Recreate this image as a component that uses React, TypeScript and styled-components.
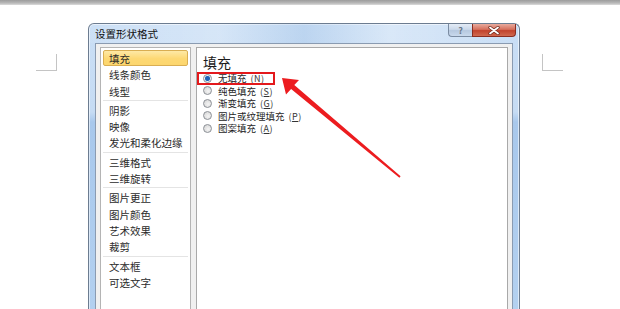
import styled, { createGlobalStyle } from "styled-components";

const GlobalStyle = createGlobalStyle`
  html, body {
    margin: 0;
    padding: 0;
    background: #ffffff;
  }
  body {
    font-family: "Noto Sans CJK SC", "Noto Sans", sans-serif;
    overflow: hidden;
  }
`;

const Page = styled.div`
  position: relative;
  width: 620px;
  height: 309px;
  overflow: hidden;
  background: #ffffff;
`;

const TopBar = styled.div`
  height: 5px;
  background: linear-gradient(#9c9c9c, #b8b8b8 60%, #dcdcdc);
`;

const Canvas = styled.div`
  display: flex;
  align-items: flex-start;
  padding: 18px 0 0 36px;
`;

const CropMark = styled.div<{ side: "left" | "right" }>`
  flex: none;
  width: 20px;
  height: 16px;
  margin-top: 31px;
  border-bottom: 1px solid #c4c4c4;
  ${({ side }) =>
    side === "left"
      ? "border-right: 1px solid #c4c4c4; margin-right: 31px;"
      : "border-left: 1px solid #c4c4c4; margin-left: 22px;"}
`;

const Dialog = styled.div`
  flex: none;
  box-sizing: border-box;
  width: 432px;
  height: 300px;
  display: flex;
  flex-direction: column;
  border: 1px solid #6c7c90;
  border-bottom: none;
  border-radius: 6px 6px 0 0;
  background: linear-gradient(
    180deg,
    #c9def5 0,
    #c6dcf4 88px,
    #a8c8ec 98px,
    #b4d1f0 100%
  );
  box-shadow: inset 0 0 0 1px rgba(255, 255, 255, 0.55);
`;

const TitleBar = styled.div`
  height: 19px;
  display: flex;
  align-items: flex-start;
  padding: 0 3px 0 6px;
  background: linear-gradient(
    90deg,
    rgba(255, 255, 255, 0.05) 0,
    rgba(255, 255, 255, 0.25) 30%,
    rgba(150, 185, 225, 0.25) 50%,
    rgba(255, 255, 255, 0.3) 70%,
    rgba(255, 255, 255, 0) 100%
  );
`;

const Title = styled.span`
  flex: 1;
  font-size: 10.5px;
  line-height: 20px;
  color: #111111;
`;

const CaptionButton = styled.div<{ kind: "help" | "close" }>`
  box-sizing: border-box;
  height: 13px;
  display: flex;
  align-items: center;
  justify-content: center;
  border: 1px solid ${({ kind }) => (kind === "close" ? "#8a2d20" : "#7b8ca2")};
  border-top: none;
  font-size: 9px;
  font-weight: 700;
  ${({ kind }) =>
    kind === "close"
      ? `
    width: 44px;
    border-radius: 0 0 4px 0;
    background: linear-gradient(#e8ab9e, #d5705d 45%, #c2432c 55%, #d0694f);
  `
      : `
    width: 24px;
    border-right: none;
    border-radius: 0 0 0 4px;
    color: #6a7788;
    background: linear-gradient(#e4ecf6, #cad8ea 45%, #b6c8df 55%, #c9d9ec);
  `}
`;

const Body = styled.div`
  flex: 1;
  display: flex;
  gap: 5px;
  margin: 0 6px;
  padding: 3px 4px 0;
  background: #f0f0f0;
  border: 1px solid #8a9bb1;
  border-bottom: none;
`;

const NavList = styled.div`
  flex: none;
  box-sizing: border-box;
  width: 91px;
  padding-top: 2px;
  background: #ffffff;
  border: 1px solid #b4b4b4;
  border-bottom: none;
`;

const NavItem = styled.div<{ active?: boolean }>`
  box-sizing: border-box;
  height: 16.3px;
  margin: 0 2px;
  padding-left: 5px;
  font-size: 10.5px;
  line-height: 16px;
  color: #2b2b2b;
  white-space: nowrap;
  border-radius: 2px;
  border: 1px solid ${({ active }) => (active ? "#d9ae52" : "transparent")};
  background: ${({ active }) =>
    active ? "linear-gradient(#fee9a6, #fdd873 55%, #fcd66e)" : "transparent"};
`;

const NavSeparator = styled.div`
  height: 1px;
  margin: 1px 2px;
  background: #e4e4e4;
`;

const Pane = styled.div`
  flex: 1;
  box-sizing: border-box;
  padding: 6px 0 0 6px;
  background: #ffffff;
  border: 1px solid #a9a9a9;
  border-bottom: none;
`;

const PaneHeading = styled.div`
  font-size: 14px;
  line-height: 16px;
  color: #1b1b1b;
  margin-bottom: 2px;
`;

const OptionRow = styled.div<{ marked?: boolean }>`
  position: relative;
  display: flex;
  align-items: center;
  gap: 6px;
  height: 12.5px;
  font-size: 9.5px;
  color: #1e1e1e;
  white-space: nowrap;
  ${({ marked }) =>
    marked
      ? `
    &::after {
      content: "";
      position: absolute;
      left: -6px;
      top: -0.5px;
      width: 78px;
      height: 13.5px;
      box-sizing: border-box;
      border: 2px solid #e3191c;
    }
  `
      : ""}
`;

const Radio = styled.span<{ checked?: boolean }>`
  flex: none;
  box-sizing: border-box;
  width: 9px;
  height: 9px;
  border-radius: 50%;
  border: 1px solid #8c9096;
  background: ${({ checked }) =>
    checked
      ? "radial-gradient(circle, #1f63b7 0 2px, #6e9fd6 2.6px, #eef2f6 3px)"
      : "radial-gradient(circle at 60% 60%, #f4f4f4, #d2d2d2)"};
`;

const Key = styled.span`
  font-size: 9px;
  margin-left: 4px;
  letter-spacing: 0.5px;
  color: #333333;
  & u {
    text-underline-offset: 1px;
  }
`;

const Annotation = styled.svg`
  position: absolute;
  left: 0;
  top: 0;
  pointer-events: none;
`;

const navGroups = [
  ["填充", "线条颜色", "线型"],
  ["阴影", "映像", "发光和柔化边缘"],
  ["三维格式", "三维旋转"],
  ["图片更正", "图片颜色", "艺术效果", "裁剪"],
  ["文本框", "可选文字"],
];

const fillOptions = [
  { label: "无填充", key: "N" },
  { label: "纯色填充", key: "S" },
  { label: "渐变填充", key: "G" },
  { label: "图片或纹理填充", key: "P" },
  { label: "图案填充", key: "A" },
];

function CloseGlyph() {
  return (
    <svg width="12" height="9" viewBox="0 0 12 9">
      <path
        d="M2 1.5 L10 7.5 M10 1.5 L2 7.5"
        stroke="#6b2418"
        strokeWidth="3.2"
        strokeLinecap="round"
      />
      <path
        d="M2 1.5 L10 7.5 M10 1.5 L2 7.5"
        stroke="#ffffff"
        strokeWidth="1.8"
        strokeLinecap="round"
      />
    </svg>
  );
}

export default function App() {
  return (
    <>
      <GlobalStyle />
      <Page>
        <TopBar />
        <Canvas>
          <CropMark side="left" />
          <Dialog>
            <TitleBar>
              <Title>设置形状格式</Title>
              <CaptionButton kind="help">?</CaptionButton>
              <CaptionButton kind="close">
                <CloseGlyph />
              </CaptionButton>
            </TitleBar>
            <Body>
              <NavList>
                {navGroups.map((group, gi) => (
                  <div key={gi}>
                    {gi > 0 && <NavSeparator />}
                    {group.map((item) => (
                      <NavItem key={item} active={item === "填充" && gi === 0}>
                        {item}
                      </NavItem>
                    ))}
                  </div>
                ))}
              </NavList>
              <Pane>
                <PaneHeading>填充</PaneHeading>
                {fillOptions.map((opt, i) => (
                  <OptionRow key={opt.key} marked={i === 0}>
                    <Radio checked={i === 0} />
                    <span>
                      {opt.label}
                      <Key>
                        (<u>{opt.key}</u>)
                      </Key>
                    </span>
                  </OptionRow>
                ))}
              </Pane>
            </Body>
          </Dialog>
          <CropMark side="right" />
        </Canvas>
        <Annotation width="620" height="309" viewBox="0 0 620 309">
          <polygon
            points="282,78 299,80 294.3,85.1 400.6,176.3 399.4,177.7 291.1,88.9 286,94.5"
            fill="#ec1c1f"
          />
        </Annotation>
      </Page>
    </>
  );
}
